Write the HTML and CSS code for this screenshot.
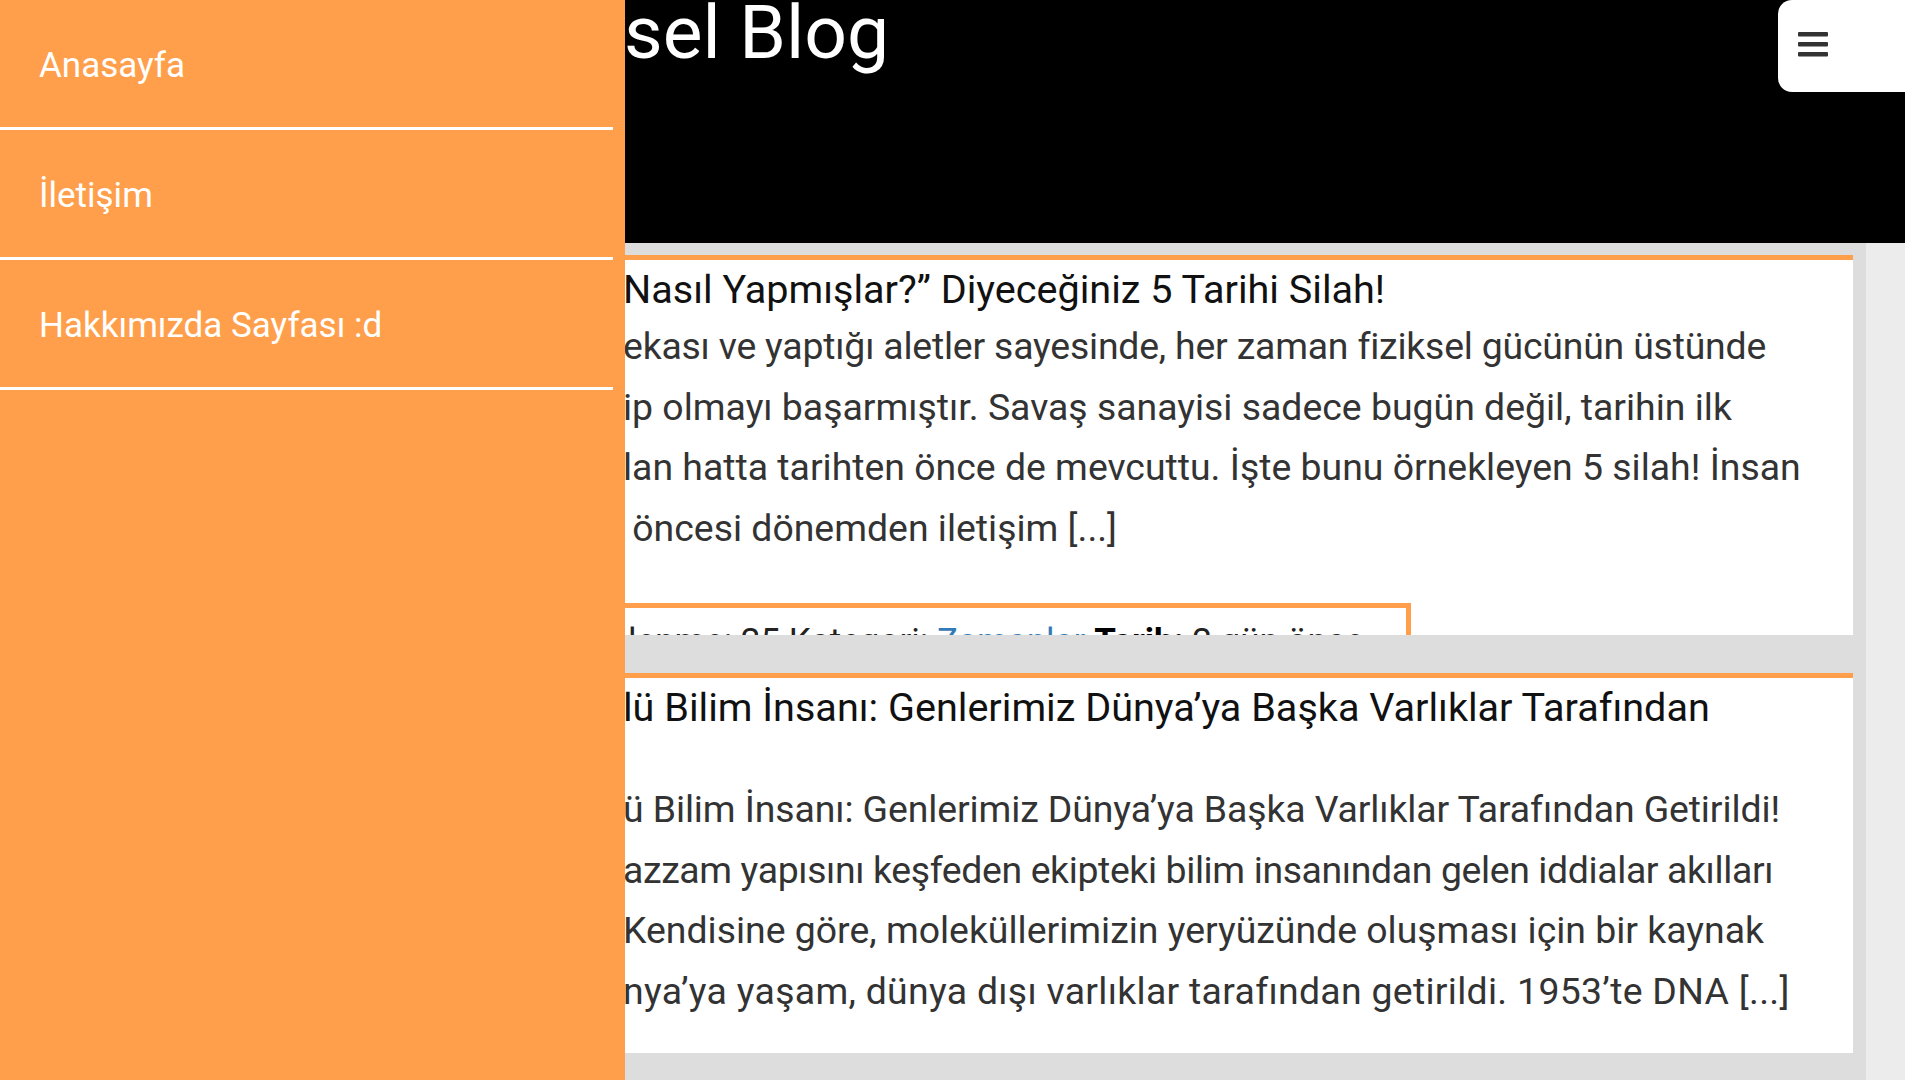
FILE: index.html
```html
<!DOCTYPE html>
<html lang="tr">
<head>
<meta charset="utf-8">
<title>Blog</title>
<link rel="stylesheet" href="styles.css">
</head>
<body>
<div class="page">
  <header class="site-header">
    <h1 class="site-title">sel Blog</h1>
  </header>
  <div class="content">
    <main class="posts">
      <article class="post">
        <h2 class="post-title">Nasıl Yapmışlar?” Diyeceğiniz 5 Tarihi Silah!</h2>
        <p class="post-excerpt"><span class="tight-1">ekası ve yaptığı aletler sayesinde, her zaman fiziksel gücünün üstünde</span><br>ip olmayı başarmıştır. Savaş sanayisi sadece bugün değil, tarihin ilk<br>lan hatta tarihten önce de mevcuttu. İşte bunu örnekleyen 5 silah! İnsan<br>&nbsp;öncesi dönemden iletişim [...]</p>
        <div class="post-meta">lenme: 25 Kategori: <a href="#">Zamanlar</a> <b>Tarih:</b> 2 gün önce</div>
      </article>
      <article class="post">
        <h2 class="post-title post-title--wrap">lü Bilim İnsanı: Genlerimiz Dünya’ya Başka Varlıklar Tarafından</h2>
        <p class="post-excerpt"><span class="tight-0">ü Bilim İnsanı: Genlerimiz Dünya’ya Başka Varlıklar Tarafından Getirildi!</span><br><span class="tight-2">azzam yapısını keşfeden ekipteki bilim insanından gelen iddialar akılları</span><br>Kendisine göre, moleküllerimizin yeryüzünde oluşması için bir kaynak<br><span class="loose-1">nya’ya yaşam, dünya dışı varlıklar tarafından getirildi. 1953’te DNA [...]</span></p>
      </article>
    </main>
    <aside class="rail"></aside>
  </div>
</div>

<nav class="drawer">
  <ul class="drawer-menu">
    <li><a href="#">Anasayfa</a></li>
    <li><a href="#">İletişim</a></li>
    <li><a href="#">Hakkımızda Sayfası :d</a></li>
  </ul>
</nav>

<button class="menu-toggle" aria-label="Menü">
  <svg width="30" height="25" viewBox="0 0 30 25">
    <rect x="0" y="0" width="30" height="4.5" rx="1" fill="#333"/>
    <rect x="0" y="10" width="30" height="4.5" rx="1" fill="#333"/>
    <rect x="0" y="20" width="30" height="4.5" rx="1" fill="#333"/>
  </svg>
</button>
</body>
</html>
```

FILE: styles.css
```css
* { box-sizing: border-box; }

html, body {
  margin: 0;
  padding: 0;
}

body {
  font-family: Roboto, "Liberation Sans", sans-serif;
  background: #ececec;
  height: 1080px;
  overflow: hidden;
}

.page {
  min-height: 1080px;
}

.site-header {
  background: #000;
  height: 243px;
}

.site-title {
  margin: 0;
  padding-left: 624px;
  color: #fff;
  font-weight: 400;
  font-size: 75px;
  line-height: 64px;
}

.content {
  display: grid;
  grid-template-columns: 1fr 39px;
  min-height: 837px;
}

.posts {
  background: #dddddd;
  padding: 12px 13px 0 13px;
}

.rail {
  background: #ececec;
}

.post {
  background: #fff;
  border-top: 5px solid #ff9f4b;
  height: 380px;
  overflow: hidden;
  margin-bottom: 38px;
  padding: 7px 40px 0 610px;
}

.post-title {
  margin: 0 0 4px;
  color: #111;
  font-weight: 400;
  font-size: 39.6px;
  line-height: 45px;
  white-space: nowrap;
}

.post-title--wrap {
  min-height: 90px;
}

.post-excerpt {
  margin: 0;
  color: #333;
  font-size: 37.4px;
  line-height: 60.6px;
  white-space: nowrap;
}

.tight-0 { letter-spacing: -0.1px; }
.tight-1 { letter-spacing: -0.2px; }
.tight-2 { letter-spacing: -0.37px; }
.loose-1 { letter-spacing: 0.3px; }

.post-meta {
  margin: 45px 0 0 -40px;
  width: 828px;
  border: 5px solid #ff9f4b;
  padding: 14px 20px 8px 40px;
  font-size: 35px;
  line-height: 40px;
  color: #222;
  white-space: nowrap;
}

.post-meta b {
  color: #000;
  font-weight: 700;
}

.post-meta a {
  color: #337ab7;
  text-decoration: none;
}

.drawer {
  position: fixed;
  top: 0;
  left: 0;
  width: 625px;
  height: 100vh;
  background: #ff9f4b;
  padding-right: 12px;
  z-index: 10;
}

.drawer-menu {
  list-style: none;
  margin: 0;
  padding: 0;
}

.drawer-menu li {
  border-bottom: 3px solid #fff;
}

.drawer-menu a {
  display: flex;
  align-items: center;
  height: 127px;
  padding: 4px 0 0 39px;
  color: #fff;
  font-size: 35px;
  text-decoration: none;
}

.menu-toggle {
  position: absolute;
  top: 0;
  right: 0;
  width: 127px;
  height: 92px;
  background: #fff;
  border: 0;
  border-radius: 14px 0 0 14px;
  padding: 32px 0 0 20px;
  display: flex;
  align-items: flex-start;
  justify-content: flex-start;
  cursor: pointer;
}

.menu-toggle svg {
  display: block;
}
```
